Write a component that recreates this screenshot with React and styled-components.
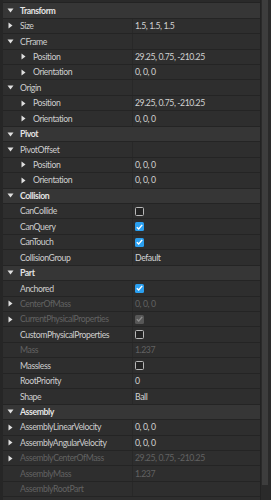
import React from "react";
import styled, { createGlobalStyle } from "styled-components";

const Global = createGlobalStyle`
  html, body { margin: 0; padding: 0; background: #2e2e2e; overflow: hidden; }
  #root { height: 500px; }
`;

const FONT = `Lato, "Noto Sans", sans-serif`;

const Page = styled.div`
  display: flex;
  height: 500px;
  overflow: hidden;
  font-family: ${FONT};
  font-size: 8.7px;
  letter-spacing: -0.42px;
  color: #cfcfcf;
`;

const List = styled.div`
  flex: 1;
  display: flex;
  flex-direction: column;
  border-left: 3px solid #262626;
  background: #2e2e2e;
  overflow: hidden;
`;

const TopBand = styled.div`
  flex: 0 0 3.3px;
  background: #2a2a2a;
  border-bottom: 1px solid #232323;
  box-sizing: border-box;
`;

const Row = styled.div`
  flex: 0 0 15.45px;
  height: 15.45px;
  box-sizing: border-box;
  display: flex;
  align-items: center;
  border-bottom: 1px solid #242424;
  background: ${(p) => (p.$header ? "#363636" : "#2e2e2e")};
`;

const NameCell = styled.div`
  display: flex;
  align-items: center;
  height: 100%;
  box-sizing: border-box;
  flex: ${(p) => (p.$header ? "1" : "0 0 130px")};
  padding-left: ${(p) => (p.$level === 2 ? 18 : 5)}px;
  border-right: ${(p) => (p.$header ? "none" : "1px solid #282828")};
  white-space: nowrap;
  overflow: hidden;
`;

const ArrowSlot = styled.span`
  flex: 0 0 12px;
  display: flex;
  align-items: center;
  height: 100%;
`;

const Label = styled.span`
  font-weight: ${(p) => (p.$header ? 700 : 400)};
  color: ${(p) => (p.$header ? "#e4e4e4" : p.$disabled ? "#626262" : "#cdcdcd")};
  line-height: 1;
  padding-top: 1px;
`;

const ValueCell = styled.div`
  flex: 1;
  display: flex;
  align-items: center;
  padding-left: 2px;
  height: 100%;
  white-space: nowrap;
  overflow: hidden;
  color: ${(p) => (p.$disabled ? "#626262" : "#d2d2d2")};
  line-height: 1;
`;

const ValueText = styled.span`
  padding-top: 1px;
`;

const Box = styled.span`
  width: 9px;
  height: 9px;
  box-sizing: border-box;
  border-radius: 1.5px;
  display: flex;
  align-items: center;
  justify-content: center;
  background: ${(p) => (p.$disabled ? "#575757" : p.$checked ? "#2a9ff0" : "#232323")};
  border: ${(p) => (p.$checked ? "none" : "1px solid #b8b8b8")};
`;

const Scrollbar = styled.div`
  flex: 0 0 11px;
  box-sizing: border-box;
  background: #2a2a2a;
  border-left: 1px solid #222;
  padding-left: 1px;
  padding-right: 3px;
`;

const Thumb = styled.div`
  height: 485px;
  background: #3d3d3d;
`;

const RightArrow = () => (
  <svg width="5" height="7" viewBox="0 0 5 7">
    <path d="M0.5 0.5 L4.5 3.5 L0.5 6.5 Z" fill="#e0e0e0" />
  </svg>
);

const DownArrow = () => (
  <svg width="7" height="5" viewBox="0 0 7 5" style={{ marginLeft: -1 }}>
    <path d="M0.5 0.5 L6.5 0.5 L3.5 4.5 Z" fill="#e0e0e0" />
  </svg>
);

const Check = ({ color }) => (
  <svg width="7" height="6" viewBox="0 0 7 6">
    <path d="M0.8 3.2 L2.7 5 L6.2 0.9" stroke={color} strokeWidth="1.4" fill="none" />
  </svg>
);

const Checkbox = ({ checked, disabled }) => (
  <Box $checked={checked} $disabled={disabled}>
    {checked && <Check color={disabled ? "#8c8c8c" : "#ffffff"} />}
  </Box>
);

const rows = [
  { h: "Transform" },
  { n: "Size", a: "r", v: "1.5, 1.5, 1.5" },
  { n: "CFrame", a: "d" },
  { n: "Position", l: 2, a: "r", v: "29.25, 0.75, -210.25" },
  { n: "Orientation", l: 2, a: "r", v: "0, 0, 0" },
  { n: "Origin", a: "d" },
  { n: "Position", l: 2, a: "r", v: "29.25, 0.75, -210.25" },
  { n: "Orientation", l: 2, a: "r", v: "0, 0, 0" },
  { h: "Pivot" },
  { n: "PivotOffset", a: "d" },
  { n: "Position", l: 2, a: "r", v: "0, 0, 0" },
  { n: "Orientation", l: 2, a: "r", v: "0, 0, 0" },
  { h: "Collision" },
  { n: "CanCollide", cb: false },
  { n: "CanQuery", cb: true },
  { n: "CanTouch", cb: true },
  { n: "CollisionGroup", v: "Default" },
  { h: "Part" },
  { n: "Anchored", cb: true },
  { n: "CenterOfMass", a: "r", dis: true, v: "0, 0, 0" },
  { n: "CurrentPhysicalProperties", a: "r", dis: true, cb: true },
  { n: "CustomPhysicalProperties", cb: false },
  { n: "Mass", dis: true, v: "1.237" },
  { n: "Massless", cb: false },
  { n: "RootPriority", v: "0" },
  { n: "Shape", v: "Ball" },
  { h: "Assembly" },
  { n: "AssemblyLinearVelocity", a: "r", v: "0, 0, 0" },
  { n: "AssemblyAngularVelocity", a: "r", v: "0, 0, 0" },
  { n: "AssemblyCenterOfMass", a: "r", dis: true, v: "29.25, 0.75, -210.25" },
  { n: "AssemblyMass", dis: true, v: "1.237" },
  { n: "AssemblyRootPart", dis: true, v: "" },
];

export default function App() {
  return (
    <>
      <Global />
      <Page>
        <List>
          <TopBand />
          {rows.map((r, i) =>
            r.h ? (
              <Row key={i} $header>
                <NameCell $header $level={1}>
                  <ArrowSlot>
                    <DownArrow />
                  </ArrowSlot>
                  <Label $header>{r.h}</Label>
                </NameCell>
              </Row>
            ) : (
              <Row key={i}>
                <NameCell $level={r.l || 1}>
                  <ArrowSlot>
                    {r.a === "r" && <RightArrow />}
                    {r.a === "d" && <DownArrow />}
                  </ArrowSlot>
                  <Label $disabled={r.dis}>{r.n}</Label>
                </NameCell>
                <ValueCell $disabled={r.dis}>
                  {r.cb !== undefined ? (
                    <Checkbox checked={r.cb} disabled={r.dis} />
                  ) : (
                    <ValueText>{r.v}</ValueText>
                  )}
                </ValueCell>
              </Row>
            )
          )}
        </List>
        <Scrollbar>
          <Thumb />
        </Scrollbar>
      </Page>
    </>
  );
}
